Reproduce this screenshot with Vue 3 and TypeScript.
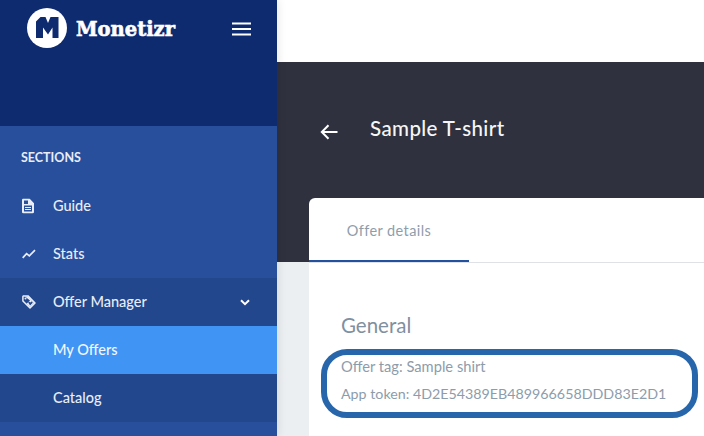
<template>
  <div class="app">
    <aside class="sidebar">
      <div class="brand">
        <div class="logo-row">
          <svg class="logo" width="40" height="40" viewBox="0 0 40 40">
            <circle cx="20" cy="20" r="20" fill="#fff" />
            <path d="M9 30V13.500L13.500 9H18.500L21 15 23.500 9H31.500V30H25.500V19.500L21 26.500 16 19.500V30z" fill="#0f2b70" />
          </svg>
          <span class="logo-text">Monetizr</span>
          <svg class="burger" width="19" height="14" viewBox="0 0 19 14">
            <path d="M0 1.500h19M0 7h19M0 12.500h19" stroke="#fff" stroke-width="2" />
          </svg>
        </div>
      </div>
      <nav class="nav">
        <div class="nav-title">SECTIONS</div>
        <div class="nav-item">
          <svg class="ico" width="12" height="15" viewBox="0 0 12 15">
            <path fill-rule="evenodd" d="M1.500 0H7.500L12 4.700V13.300C12 14.300 11.400 15 10.500 15H1.500C.6 15 0 14.300 0 13.300V1.500C0 .6.600 0 1.500 0zM2 7V13H10V7zM2 2V5.500H6V2z" fill="#e8edf8" />
            <path d="M3 9H9M3 11H9" fill="none" stroke="#e8edf8" stroke-width="1.100" />
          </svg>
          <span>Guide</span>
        </div>
        <div class="nav-item">
          <svg class="ico" width="14" height="10" viewBox="0 0 14 10">
            <path d="M.7 8.800 4.600 4.600 7.300 6.800 13 1.200" fill="none" stroke="#e8edf8" stroke-width="1.700" />
          </svg>
          <span>Stats</span>
        </div>
        <div class="group">
          <div class="nav-item">
            <svg class="ico" width="14" height="14" viewBox="0 0 14 14">
              <path d="M1.500.9H6L13 8 8 13 .9 6V1.500z" fill="none" stroke="#e8edf8" stroke-width="1.500" stroke-linejoin="round" />
              <path d="M3 1.500 6 1.500 12.300 8 8 12.300 4.500 8.800 8 5.500z" fill="#e8edf8" />
              <path d="M8.100 10.500 10.500 8C11 7.200 10 6.200 9.200 6.800L8.400 7.500 7.700 6.900C6.900 6.200 5.800 7.300 6.500 8.100z" fill="#23478c" />
              <circle cx="3.500" cy="3.500" r="1" fill="#e8edf8" />
            </svg>
            <span>Offer Manager</span>
            <svg class="chev" width="10" height="7" viewBox="0 0 10 7">
              <path d="M1 1.200 5 5.200 9 1.200" fill="none" stroke="#fff" stroke-width="2" />
            </svg>
          </div>
          <div class="nav-item sub active"><span>My Offers</span></div>
          <div class="nav-item sub"><span>Catalog</span></div>
        </div>
      </nav>
    </aside>
    <main class="main">
      <div class="topbar"></div>
      <div class="hero">
        <svg class="back" width="18" height="16" viewBox="0 0 18 16">
          <path d="M17.500 8H2M8.500 1.200 1.800 8l6.700 6.800" fill="none" stroke="#fff" stroke-width="2" />
        </svg>
        <h1>Sample T-shirt</h1>
      </div>
      <div class="body">
        <section class="card">
          <div class="tabs">
            <div class="tab">Offer details</div>
          </div>
          <div class="details">
            <h2>General</h2>
            <p>Offer tag: Sample shirt</p>
            <p class="token">App token: 4D2E54389EB489966658DDD83E2D1</p>
            <div class="ring"></div>
          </div>
        </section>
      </div>
    </main>
  </div>
</template>

<script setup lang="ts">
</script>

<style>
html,
body {
  margin: 0;
  overflow: hidden;
}
</style>

<style scoped>
.app {
  display: flex;
  width: 704px;
  height: 436px;
  overflow: hidden;
  font-family: Lato, "Open Sans", sans-serif;
}

.sidebar {
  flex: 0 0 277px;
  display: flex;
  flex-direction: column;
  background: #284f9c;
  color: #e8edf8;
  z-index: 2;
  box-shadow: 2px 0 8px rgba(0, 0, 0, 0.08);
}

.brand {
  height: 126px;
  box-sizing: border-box;
  padding: 8px 26px 0 27px;
  background: #0f2b70;
}

.logo-row {
  display: flex;
  align-items: center;
  height: 40px;
}

.logo {
  flex: none;
}

.logo-text {
  margin-left: 9px;
  margin-top: 2px;
  font-family: "DejaVu Serif", serif;
  font-weight: 700;
  font-size: 19.500px;
  letter-spacing: 0;
  color: #fff;
  -webkit-text-stroke: 0.6px #fff;
}

.burger {
  margin-left: auto;
  margin-top: 2px;
}

.nav {
  flex: 1;
}

.nav-title {
  height: 56px;
  box-sizing: border-box;
  padding: 24px 0 0 21px;
  font-size: 12.500px;
  line-height: 16px;
  font-weight: 700;
  color: #e8edf8;
}

.nav-item {
  display: flex;
  align-items: center;
  height: 48px;
  padding-left: 53px;
  padding-right: 27px;
  position: relative;
  font-size: 14.500px;
  font-weight: 500;
}

.nav-item span {
  margin-top: -2px;
}

.ico {
  position: absolute;
  left: 22px;
  top: 50%;
  transform: translateY(-50%);
}

.group {
  background: #23478c;
}

.chev {
  margin-left: auto;
}

.active {
  background: #3f94f4;
  color: #f2f7ff;
}

.main {
  flex: 1;
  min-width: 0;
  background: #ebeff2;
}

.topbar {
  height: 62px;
  background: #fff;
}

.hero {
  height: 136px;
  display: flex;
  align-items: flex-start;
  padding-left: 43px;
  background: #2f323e;
  color: #fff;
}

.back {
  margin-top: 62px;
}

h1 {
  margin: 52px 0 0 32px;
  font-size: 20.500px;
  line-height: 28px;
  font-weight: 500;
  letter-spacing: 0.4px;
  color: #f6f6f7;
}

.body {
  padding-left: 32px;
  background: linear-gradient(#2f323e 64px, #ebeff2 64px);
}

.card {
  height: 238px;
  background: #fff;
  border-radius: 6px 0 0 0;
}

.tabs {
  height: 65px;
  box-sizing: border-box;
  border-bottom: 1px solid #dee2e6;
}

.tab {
  width: 160px;
  height: 64px;
  box-sizing: border-box;
  padding-top: 23px;
  text-align: center;
  font-size: 14.500px;
  line-height: 20px;
  letter-spacing: 0.4px;
  color: #8f9dab;
  border-bottom: 2px solid #23509f;
}

.details {
  position: relative;
  padding: 49px 0 0 32px;
  color: #8d9cab;
}

h2 {
  margin: 0 0 18px;
  font-size: 20.500px;
  line-height: 26px;
  font-weight: 400;
  color: #7f90a0;
}

p {
  margin: 0 0 8px;
  font-size: 14.700px;
  line-height: 20px;
}

.token {
  font-size: 14.250px;
}

.ring {
  position: absolute;
  left: 12px;
  top: 86px;
  width: 377px;
  height: 69px;
  box-sizing: border-box;
  border: 6px solid #2866ac;
  border-radius: 26px;
}
</style>
